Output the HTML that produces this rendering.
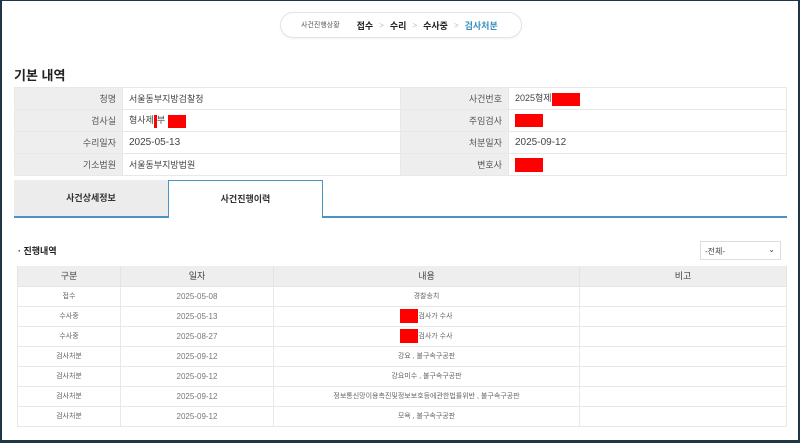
<!DOCTYPE html>
<html><head><meta charset="utf-8"><style>
*{margin:0;padding:0;box-sizing:border-box}
body{width:800px;height:443px;overflow:hidden;background:#fff;font-family:"Liberation Sans","Noto Sans CJK KR",sans-serif;color:#333;position:relative}
.frame{position:absolute;left:0;top:0;width:800px;height:443px;border:2px solid #1f3644;border-top-width:1px;border-bottom-width:3px}
.crumb{position:absolute;left:280px;top:12px;width:242px;height:26px;border:1px solid #e3e3e3;border-radius:13px;font-size:9px;display:flex;align-items:center;padding-left:20px;box-shadow:0 1px 2px rgba(0,0,0,.05)}
.crumb .s{font-size:7px;color:#555;margin-right:17px}
.crumb b{font-size:9px;color:#222}
.crumb i{font-style:normal;color:#bbb;margin:0 6px;font-size:8px}
.crumb .c{color:#3a8fc0}
h2{position:absolute;left:14px;top:65px;font-size:13px;color:#222}
table{border-collapse:collapse}
.info{position:absolute;left:14px;top:87px;width:773px;font-size:9px}
.info td{height:22px;border:1px solid #e8e8e8;padding:0 6px;color:#444}
.info td.l{background:#eeeeee;text-align:right;width:108px;color:#555}
.r{display:inline-block;background:#f00;height:13px;vertical-align:middle}
.tabs{position:absolute;left:14px;top:180px;width:773px;height:38px;border-bottom:2px solid #4a93c2}
.t1{position:absolute;left:0;top:0;width:154px;height:36px;background:#ececec;font-size:9px;font-weight:bold;text-align:center;line-height:36px}
.t2{position:absolute;left:154px;top:0;width:155px;height:38px;background:#fff;border:1px solid #4a93c2;border-bottom:none;font-size:9px;font-weight:bold;text-align:center;line-height:36px}
.sub{position:absolute;left:18px;top:244px;font-size:9px;font-weight:bold;color:#222}
.sel{position:absolute;left:700px;top:241px;width:81px;height:19px;border:1px solid #ddd;font-size:8px;color:#444;padding:4px 4px}
.sel span{position:absolute;right:5px;top:3px;font-size:8px}
.hist{position:absolute;left:17px;top:266px;width:770px;font-size:7px;color:#666;text-align:center}
.hist th{height:20px;background:#eeeeee;font-weight:normal;font-size:9px;color:#444;border:1px solid #e4e4e4;border-top:none}
.hist td{height:20px;border:1px solid #e8e8e8;border-top-color:#eee}
.hist td.d{font-size:8px;color:#777}
</style></head><body>
<div class="frame"></div>
<div class="crumb"><span class="s">사건진행상황</span><b>접수</b><i>&gt;</i><b>수리</b><i>&gt;</i><b>수사중</b><i>&gt;</i><b class="c">검사처분</b></div>
<h2>기본 내역</h2>
<table class="info">
<tr><td class="l">청명</td><td style="width:278px">서울동부지방검찰청</td><td class="l">사건번호</td><td>2025형제<span class="r" style="width:28px"></span></td></tr>
<tr><td class="l">검사실</td><td>형사제<span class="r" style="width:3px"></span>부 <span class="r" style="width:18px"></span></td><td class="l">주임검사</td><td><span class="r" style="width:28px"></span></td></tr>
<tr><td class="l">수리일자</td><td style="font-size:10px">2025-05-13</td><td class="l">처분일자</td><td style="font-size:10px">2025-09-12</td></tr>
<tr><td class="l">기소법원</td><td>서울동부지방법원</td><td class="l">변호사</td><td><span class="r" style="width:28px;height:14px"></span></td></tr>
</table>
<div class="tabs"><div class="t1">사건상세정보</div><div class="t2">사건진행이력</div></div>
<div class="sub">· 진행내역</div>
<div class="sel">-전체-<span>⌄</span></div>
<table class="hist">
<tr><th style="width:103px">구분</th><th style="width:153px">일자</th><th style="width:306px">내용</th><th>비고</th></tr>
<tr><td>접수</td><td class="d">2025-05-08</td><td>경찰송치</td><td></td></tr>
<tr><td>수사중</td><td class="d">2025-05-13</td><td><span class="r" style="width:18px;height:14px"></span>검사가 수사</td><td></td></tr>
<tr><td>수사중</td><td class="d">2025-08-27</td><td><span class="r" style="width:18px;height:14px"></span>검사가 수사</td><td></td></tr>
<tr><td>검사처분</td><td class="d">2025-09-12</td><td>강요 , 불구속구공판</td><td></td></tr>
<tr><td>검사처분</td><td class="d">2025-09-12</td><td>강요미수 , 불구속구공판</td><td></td></tr>
<tr><td>검사처분</td><td class="d">2025-09-12</td><td>정보통신망이용촉진및정보보호등에관한법률위반 , 불구속구공판</td><td></td></tr>
<tr><td>검사처분</td><td class="d">2025-09-12</td><td>모욕 , 불구속구공판</td><td></td></tr>
</table>
</body></html>
